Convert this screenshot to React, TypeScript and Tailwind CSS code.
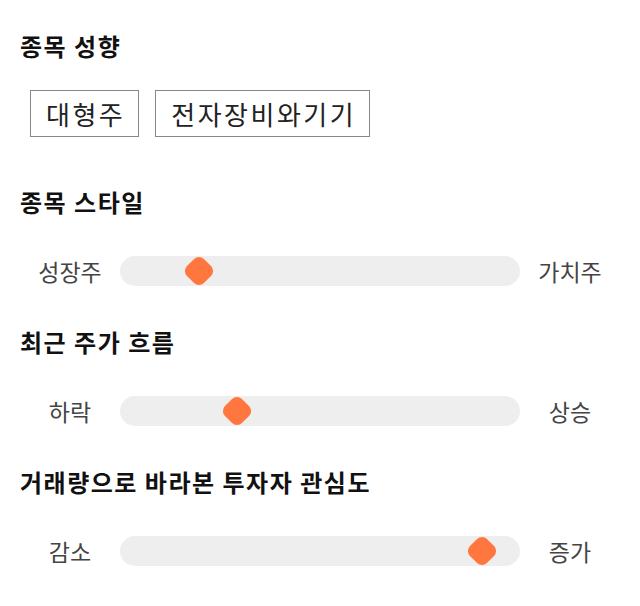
const tags = ["대형주", "전자장비와기기"]

const sliders = [
  { title: "종목 스타일", left: "성장주", right: "가치주", value: 17.3 },
  { title: "최근 주가 흐름", left: "하락", right: "상승", value: 27.6 },
  { title: "거래량으로 바라본 투자자 관심도", left: "감소", right: "증가", value: 93.8 },
]

const Heading = ({ children }: { children: string }) => (
  <h2 className="text-[24px] leading-[28px] font-bold tracking-[1.5px] text-[#111]">{children}</h2>
)

const Slider = ({ left, right, value }: { left: string; right: string; value: number }) => (
  <div className="flex items-center">
    <span className="w-[100px] text-center text-[23px] leading-[30px] text-[#444]">{left}</span>
    <div className="relative h-[30px] w-[400px] rounded-full bg-[#eeeeee]">
      <div className="absolute inset-y-0 left-[15px] right-[15px]">
        <div
          className="absolute top-1/2 h-6 w-6 -translate-x-1/2 -translate-y-1/2 rotate-45 rounded-[7px] bg-[#ff773f]"
          style={{ left: `${value}%` }}
        />
      </div>
    </div>
    <span className="w-[100px] text-center text-[23px] leading-[30px] text-[#444]">{right}</span>
  </div>
)

export default function App() {
  return (
    <div
      className="min-h-[606px] bg-white px-5 pt-8"
      style={{ fontFamily: '"Noto Sans CJK KR", "Noto Sans", sans-serif' }}
    >
      <Heading>종목 성향</Heading>
      <div className="mt-[30px] flex gap-4 pl-[10px]">
        {tags.map((t) => (
          <span
            key={t}
            className="flex h-[47px] items-center border border-[#888] pl-[15px] pr-[13px] text-[26px] tracking-[2.5px] text-[#222]"
          >
            {t}
          </span>
        ))}
      </div>

      {sliders.map((s, i) => (
        <section key={s.title} className={i === 0 ? "mt-[51px]" : "mt-[42px]"}>
          <Heading>{s.title}</Heading>
          <div className="mt-10">
            <Slider left={s.left} right={s.right} value={s.value} />
          </div>
        </section>
      ))}
    </div>
  )
}
